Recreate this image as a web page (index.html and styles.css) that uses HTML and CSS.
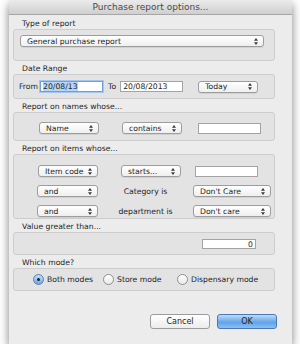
FILE: index.html
```html
<!DOCTYPE html>
<html lang="en">
  <head>
    <meta charset="UTF-8" />
    <meta name="viewport" content="width=device-width, initial-scale=1.0" />
    <title>Purchase report options...</title>
    <link rel="stylesheet" href="styles.css">
  </head>
  <body>
    <div class="window">
      <div class="titlebar">Purchase report options...</div>

      <div class="content">
        <div class="label first">Type of report</div>
        <div class="box box-type">
          <div class="popup wide">
            <span>General purchase report</span>
            <svg class="arrows" width="4" height="7" viewBox="0 0 4 7"><polygon points="0,2.8 2,0 4,2.8" /><polygon points="0,4.2 2,7 4,4.2" /></svg>
          </div>
        </div>

        <div class="label">Date Range</div>
        <div class="box box-date">
          <span class="txt">From</span>
          <div class="field focus w-from"><span class="sel">20/08/13</span></div>
          <span class="txt to">To</span>
          <div class="field w-to">20/08/2013</div>
          <div class="popup w-today">
            <span>Today</span>
            <svg class="arrows" width="4" height="7" viewBox="0 0 4 7"><polygon points="0,2.8 2,0 4,2.8" /><polygon points="0,4.2 2,7 4,4.2" /></svg>
          </div>
        </div>

        <div class="label">Report on names whose...</div>
        <div class="box box-names">
          <div class="row">
            <div class="popup w-a">
              <span>Name</span>
              <svg class="arrows" width="4" height="7" viewBox="0 0 4 7"><polygon points="0,2.8 2,0 4,2.8" /><polygon points="0,4.2 2,7 4,4.2" /></svg>
            </div>
            <div class="popup w-b">
              <span>contains</span>
              <svg class="arrows" width="4" height="7" viewBox="0 0 4 7"><polygon points="0,2.8 2,0 4,2.8" /><polygon points="0,4.2 2,7 4,4.2" /></svg>
            </div>
            <div class="field w-c"></div>
          </div>
        </div>

        <div class="label">Report on items whose...</div>
        <div class="box box-items">
          <div class="row">
            <div class="popup w-a">
              <span>Item code</span>
              <svg class="arrows" width="4" height="7" viewBox="0 0 4 7"><polygon points="0,2.8 2,0 4,2.8" /><polygon points="0,4.2 2,7 4,4.2" /></svg>
            </div>
            <div class="popup w-b">
              <span>starts...</span>
              <svg class="arrows" width="4" height="7" viewBox="0 0 4 7"><polygon points="0,2.8 2,0 4,2.8" /><polygon points="0,4.2 2,7 4,4.2" /></svg>
            </div>
            <div class="field w-c2"></div>
          </div>
          <div class="row">
            <div class="popup w-and">
              <span>and</span>
              <svg class="arrows" width="4" height="7" viewBox="0 0 4 7"><polygon points="0,2.8 2,0 4,2.8" /><polygon points="0,4.2 2,7 4,4.2" /></svg>
            </div>
            <span class="mid">Category is</span>
            <div class="popup w-care">
              <span>Don't Care</span>
              <svg class="arrows" width="4" height="7" viewBox="0 0 4 7"><polygon points="0,2.8 2,0 4,2.8" /><polygon points="0,4.2 2,7 4,4.2" /></svg>
            </div>
          </div>
          <div class="row">
            <div class="popup w-and">
              <span>and</span>
              <svg class="arrows" width="4" height="7" viewBox="0 0 4 7"><polygon points="0,2.8 2,0 4,2.8" /><polygon points="0,4.2 2,7 4,4.2" /></svg>
            </div>
            <span class="mid">department is</span>
            <div class="popup w-care">
              <span>Don't care</span>
              <svg class="arrows" width="4" height="7" viewBox="0 0 4 7"><polygon points="0,2.8 2,0 4,2.8" /><polygon points="0,4.2 2,7 4,4.2" /></svg>
            </div>
          </div>
        </div>

        <div class="label">Value greater than...</div>
        <div class="box box-value">
          <div class="field w-value">0</div>
        </div>

        <div class="label">Which mode?</div>
        <div class="box box-mode">
          <label class="radio r-both"><span class="dot on"></span>Both modes</label>
          <label class="radio r-store"><span class="dot"></span>Store mode</label>
          <label class="radio"><span class="dot"></span>Dispensary mode</label>
        </div>

        <div class="buttons">
          <div class="btn">Cancel</div>
          <div class="btn ok">OK</div>
        </div>
      </div>
    </div>
  </body>
</html>
```

FILE: styles.css
```css
* {
  margin: 0;
  padding: 0;
  box-sizing: border-box;
}

body {
  background: #fff;
  font-family: "DejaVu Sans", sans-serif;
  font-size: 7.7px;
  color: #1e1e1e;
}

.window {
  margin-left: 9px;
  width: 283px;
  height: 344px;
  background: #ececec;
  box-shadow: 0 4px 9px rgba(0, 0, 0, 0.5);
}

.titlebar {
  height: 15px;
  background: linear-gradient(#ebebeb, #cfcfcf);
  border-bottom: 1px solid #a6a6a6;
  text-align: center;
  font-size: 9px;
  line-height: 14px;
  color: #4a4a4a;
}

.content {
  padding: 0 17px 0 4px;
}

/* section captions */
.label {
  height: 13px;
  padding-left: 9px;
  display: flex;
  align-items: flex-end;
  padding-bottom: 1px;
}

.label.first {
  height: 14px;
}

.box {
  background: #e3e3e3;
  border: 1px solid #cdcdcd;
  border-radius: 3px;
}

.box-type {
  height: 32px;
  padding: 5px 11px 0 6px;
}

.box-date {
  height: 25px;
  display: flex;
  align-items: center;
  padding-left: 5px;
}

.box-names {
  height: 29px;
  padding: 9px 0 0 25px;
}

.box-items {
  height: 65px;
  padding: 10px 0 0 24px;
  display: flex;
  flex-direction: column;
  gap: 8px;
}

.box-value {
  height: 23px;
  display: flex;
  justify-content: flex-end;
  align-items: center;
  padding-right: 18px;
}

.box-mode {
  height: 23px;
  display: flex;
  align-items: center;
  padding-left: 19px;
}

.row {
  display: flex;
  align-items: center;
}

/* popup buttons */
.popup {
  height: 12px;
  border: 1px solid #9d9d9d;
  border-radius: 3px;
  background: linear-gradient(#ffffff, #efefef);
  display: flex;
  align-items: center;
  justify-content: space-between;
  padding: 0 5px 0 6px;
  box-shadow: 0 1px 0 rgba(0, 0, 0, 0.08);
}

.arrows {
  fill: #3a3a3a;
}

.wide {
  width: 244px;
}

.w-today {
  width: 60px;
  margin-left: 15px;
}

.w-a {
  width: 60px;
}

.w-b {
  width: 60px;
  margin-left: 23px;
}

.w-and {
  width: 61px;
  margin-left: -1px;
}

.w-care {
  width: 78px;
}

.mid {
  width: 95px;
  text-align: center;
}

/* text fields */
.field {
  height: 11px;
  background: #fff;
  border: 1px solid #a3a3a3;
  padding: 0 2px;
  line-height: 9px;
}

.field.focus {
  border-color: #6e9fd9;
  box-shadow: 0 0 0 1px #a5c6ee;
}

.sel {
  background: #b7d5f7;
}

.txt {
  margin-right: 2px;
}

.to {
  margin-left: 5px;
  margin-right: 4px;
}

.w-from {
  width: 63px;
}

.w-to {
  width: 63px;
}

.w-c {
  width: 63px;
  margin-left: 16px;
}

.w-c2 {
  width: 63px;
  margin-left: 14px;
}

.w-value {
  width: 54px;
  height: 10px;
  text-align: right;
}

/* radios */
.radio {
  display: flex;
  align-items: center;
}

.r-both {
  width: 70px;
}

.r-store {
  width: 74px;
}

.dot {
  width: 11px;
  height: 11px;
  border-radius: 50%;
  border: 1px solid #8f8f8f;
  background: linear-gradient(#ffffff, #e9e9e9);
  margin-right: 3px;
  display: flex;
  align-items: center;
  justify-content: center;
}

.dot.on {
  border-color: #5a7fb4;
  background: linear-gradient(#c9dff7, #6fa6e3);
}

.dot.on::after {
  content: "";
  width: 3px;
  height: 3px;
  border-radius: 50%;
  background: #1a2433;
}

.buttons {
  display: flex;
  justify-content: flex-end;
  gap: 7px;
  margin-top: 23px;
  margin-right: -2px;
}

.btn {
  width: 60px;
  height: 15px;
  border: 1px solid #9c9c9c;
  border-radius: 3px;
  background: linear-gradient(#ffffff, #ececec);
  text-align: center;
  line-height: 13px;
  font-size: 8px;
}

.btn.ok {
  border-color: #4c79b5;
  background: linear-gradient(#bcdcfa, #6eaaea 50%, #5d9fe6 51%, #8ac0f2);
}
```
